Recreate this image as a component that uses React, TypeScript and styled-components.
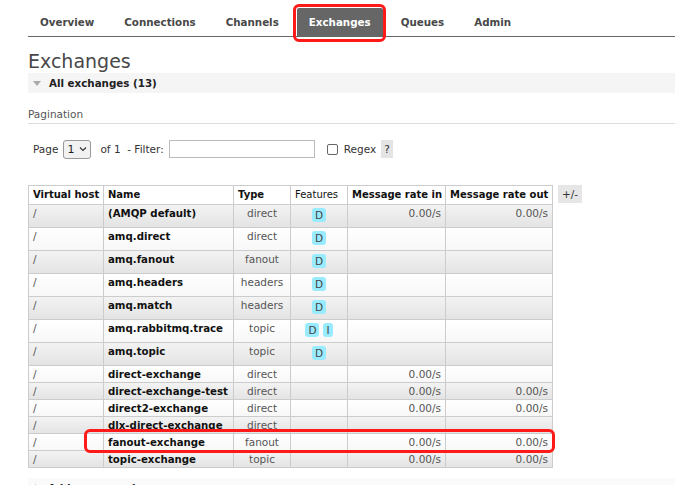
import React from "react";
import styled, { createGlobalStyle } from "styled-components";

const GlobalStyle = createGlobalStyle`
  html, body {
    margin: 0;
    padding: 0;
    background: #fff;
  }
  body {
    font-family: "DejaVu Sans", Verdana, sans-serif;
    font-size: 10.5px;
    color: #444;
  }
`;

const Page = styled.div`
  padding: 0 0 0 28px;
`;

const Nav = styled.ul`
  display: flex;
  list-style: none;
  margin: 0;
  padding: 8px 0 0 0;
  border-bottom: 1px solid #666;
  height: 28px;
`;

const Tab = styled.li<{ $active?: boolean }>`
  position: relative;
  height: 28px;
  line-height: 28px;
  padding: 0 12px;
  margin-right: 6px;
  font-weight: bold;
  font-size: 10.3px;
  color: ${(p) => (p.$active ? "#fff" : "#484848")};
  background: ${(p) => (p.$active ? "#666" : "transparent")};
  border-radius: 2px 2px 0 0;
  ${(p) =>
    p.$active &&
    `
    &::after {
      content: "";
      position: absolute;
      left: -4px;
      right: -3px;
      top: -4px;
      bottom: -6px;
      border: 3px solid #ff1a1a;
      border-radius: 6px;
    }
  `}
`;

const Title = styled.h1`
  margin: 13px 0 0 0;
  font-size: 19px;
  font-weight: normal;
  line-height: 23px;
  color: #484848;
`;

const SectionBar = styled.div`
  display: flex;
  align-items: center;
  height: 20px;
  background: #f5f5f5;
  font-weight: bold;
  font-size: 10.3px;
  color: #222;
`;

const Arrow = styled.span<{ $open?: boolean }>`
  display: inline-block;
  width: 0;
  height: 0;
  margin: 0 8px 0 5px;
  ${(p) =>
    p.$open
      ? `border-left: 4px solid transparent;
         border-right: 4px solid transparent;
         border-top: 5px solid #aaa;`
      : `border-top: 4px solid transparent;
         border-bottom: 4px solid transparent;
         border-left: 5px solid #aaa;
         margin-left: 7px;`}
`;

const SubHeading = styled.div`
  margin-top: 14px;
  padding-bottom: 2px;
  line-height: 14px;
  border-bottom: 1px solid #ddd;
  color: #555;
`;

const PagerRow = styled.div`
  display: flex;
  align-items: center;
  margin: 15px 0 0 5px;
  height: 20px;
  color: #333;
`;

const Select = styled.span`
  display: inline-flex;
  align-items: center;
  gap: 5px;
  height: 17px;
  margin: 0 9px 0 5px;
  padding: 0 3px 0 3px;
  border: 1px solid #999;
  border-radius: 3px;
  background: #f2f2f2;
  font-size: 11px;
  color: #222;
`;

const Input = styled.span`
  display: inline-block;
  width: 144px;
  height: 16px;
  margin: 0 12px 0 5px;
  border: 1px solid #bbb;
  background: #fff;
`;

const Check = styled.span`
  display: inline-block;
  width: 9px;
  height: 9px;
  border: 1px solid #666;
  border-radius: 2px;
  margin-right: 6px;
`;

const Help = styled.span`
  display: inline-block;
  margin-left: 5px;
  padding: 0 3px;
  height: 18px;
  line-height: 18px;
  background: #e4e4e4;
`;

const TableRow = styled.div`
  display: flex;
  align-items: flex-start;
  gap: 5px;
  margin-top: 26px;
`;

const Table = styled.table`
  border-collapse: collapse;
  table-layout: fixed;
  width: 525px;
  border: 1px solid #ccc;
`;

const Th = styled.th<{ $w: number; $plain?: boolean }>`
  box-sizing: border-box;
  width: ${(p) => p.$w}px;
  padding: 2px 3px 2px 4px;
  line-height: 14px;
  text-align: left;
  white-space: nowrap;
  font-weight: ${(p) => (p.$plain ? "normal" : "bold")};
  font-size: 10px;
  color: #111;
  border: 1px solid #ccc;
  background: #fff;
`;

const Tr = styled.tr<{ $odd: boolean }>`
  background: ${(p) =>
    p.$odd
      ? "linear-gradient(#f3f3f3, #e3e3e3)"
      : "linear-gradient(#ffffff, #f7f7f7)"};
`;

const Td = styled.td<{ $align?: string; $bold?: boolean; $mark?: boolean }>`
  position: relative;
  padding: 2px 4px 1px 4px;
  line-height: 13px;
  vertical-align: top;
  white-space: nowrap;
  overflow: visible;
  text-align: ${(p) => p.$align || "left"};
  font-weight: ${(p) => (p.$bold ? "bold" : "normal")};
  font-size: ${(p) => (p.$bold ? "10.2px" : "10.5px")};
  color: ${(p) => (p.$bold ? "#111" : "#555")};
  border: 1px solid #ccc;
  ${(p) =>
    p.$mark &&
    `
    &::after {
      content: "";
      position: absolute;
      left: 55px;
      width: 465px;
      top: -5px;
      bottom: -3px;
      border: 3px solid #ff1a1a;
      border-radius: 6px;
      pointer-events: none;
    }
  `}
`;

const Badge = styled.span`
  display: inline-block;
  height: 14px;
  line-height: 14px;
  padding: 0 3px;
  margin: 1px 2px 4px;
  border-radius: 3px;
  background: #99ebff;
  color: #444;
  font-size: 10.5px;
`;

const Toggle = styled.span`
  display: inline-block;
  padding: 0 4px;
  height: 18px;
  line-height: 18px;
  background: #e6e6e6;
  color: #333;
`;

const BottomBar = styled(SectionBar)`
  margin-top: 10px;
  background: #fafafa;
`;

type Ex = {
  name: string;
  type: string;
  features: string[];
  rin: string;
  rout: string;
  mark?: boolean;
};

const rows: Ex[] = [
  { name: "(AMQP default)", type: "direct", features: ["D"], rin: "0.00/s", rout: "0.00/s" },
  { name: "amq.direct", type: "direct", features: ["D"], rin: "", rout: "" },
  { name: "amq.fanout", type: "fanout", features: ["D"], rin: "", rout: "" },
  { name: "amq.headers", type: "headers", features: ["D"], rin: "", rout: "" },
  { name: "amq.match", type: "headers", features: ["D"], rin: "", rout: "" },
  { name: "amq.rabbitmq.trace", type: "topic", features: ["D", "I"], rin: "", rout: "" },
  { name: "amq.topic", type: "topic", features: ["D"], rin: "", rout: "" },
  { name: "direct-exchange", type: "direct", features: [], rin: "0.00/s", rout: "" },
  { name: "direct-exchange-test", type: "direct", features: [], rin: "0.00/s", rout: "0.00/s" },
  { name: "direct2-exchange", type: "direct", features: [], rin: "0.00/s", rout: "0.00/s" },
  { name: "dlx-direct-exchange", type: "direct", features: [], rin: "", rout: "" },
  { name: "fanout-exchange", type: "fanout", features: [], rin: "0.00/s", rout: "0.00/s", mark: true },
  { name: "topic-exchange", type: "topic", features: [], rin: "0.00/s", rout: "0.00/s" },
];

const tabs = ["Overview", "Connections", "Channels", "Exchanges", "Queues", "Admin"];

export default function App() {
  return (
    <Page>
      <GlobalStyle />
      <Nav>
        {tabs.map((t) => (
          <Tab key={t} $active={t === "Exchanges"}>
            {t}
          </Tab>
        ))}
      </Nav>
      <Title>Exchanges</Title>
      <SectionBar>
        <Arrow $open />
        All exchanges (13)
      </SectionBar>
      <SubHeading>Pagination</SubHeading>
      <PagerRow>
        Page
        <Select>
          1
          <svg width="8" height="6" viewBox="0 0 8 6">
            <path d="M1 1.5 L4 4.5 L7 1.5" fill="none" stroke="#333" strokeWidth="1.2" />
          </svg>
        </Select>
        of 1&nbsp;&nbsp;- Filter:
        <Input />
        <Check />
        Regex
        <Help>?</Help>
      </PagerRow>
      <TableRow>
        <Table>
          <thead>
            <tr>
              <Th $w={75}>Virtual host</Th>
              <Th $w={130}>Name</Th>
              <Th $w={57}>Type</Th>
              <Th $w={57} $plain>
                Features
              </Th>
              <Th $w={98}>Message rate in</Th>
              <Th $w={107}>Message rate out</Th>
            </tr>
          </thead>
          <tbody>
            {rows.map((r, i) => (
              <Tr key={r.name} $odd={i % 2 === 0}>
                <Td $mark={r.mark}>/</Td>
                <Td $bold>{r.name}</Td>
                <Td $align="center">{r.type}</Td>
                <Td $align="center">
                  {r.features.map((f) => (
                    <Badge key={f}>{f}</Badge>
                  ))}
                </Td>
                <Td $align="right">{r.rin}</Td>
                <Td $align="right">{r.rout}</Td>
              </Tr>
            ))}
          </tbody>
        </Table>
        <Toggle>+/-</Toggle>
      </TableRow>
      <BottomBar>
        <Arrow />
        Add a new exchange
      </BottomBar>
    </Page>
  );
}
